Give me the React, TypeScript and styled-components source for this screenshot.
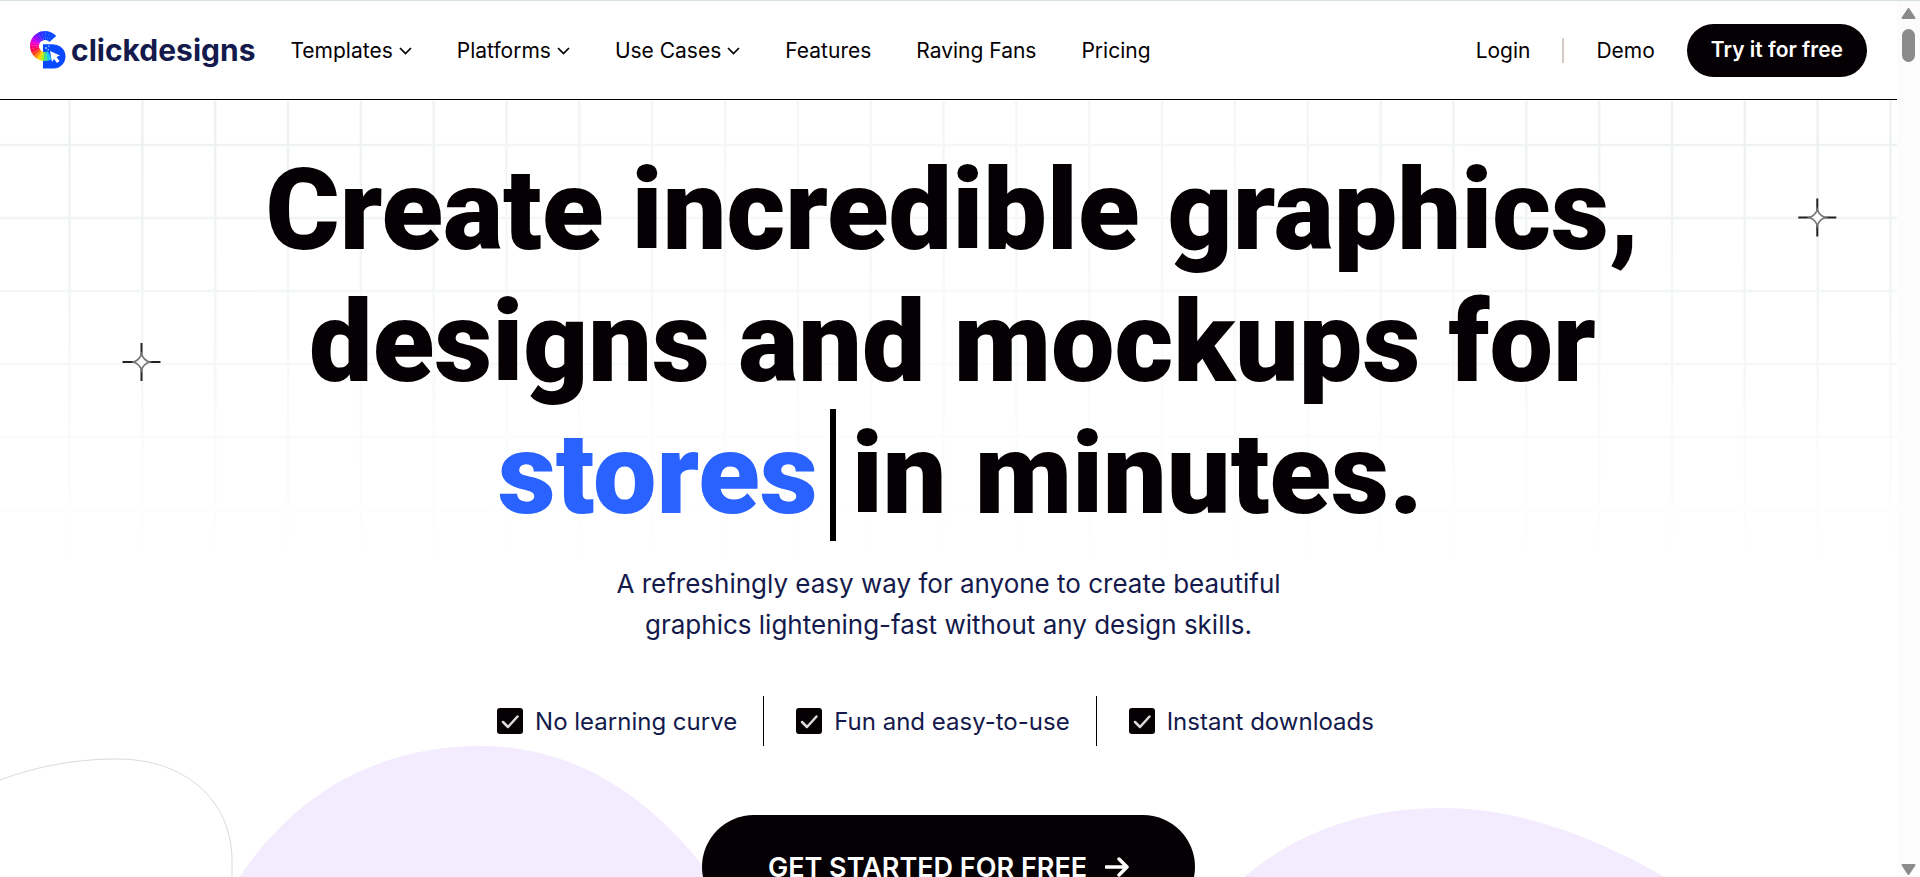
import React from "react";
import styled, { createGlobalStyle } from "styled-components";

const ink = "#050003";
const navy = "#141a4b";

const GlobalStyle = createGlobalStyle`
  *, *::before, *::after { box-sizing: border-box; }
  body { margin: 0; background: #fff; font-family: Inter, "Liberation Sans", sans-serif; color: ${ink}; }
  h1, p, ul { margin: 0; padding: 0; }
  ul { list-style: none; }
  a { color: inherit; text-decoration: none; }
  button { font: inherit; border: 0; cursor: pointer; }
`;

const Frame = styled.div`
  display: grid;
  grid-template-columns: 1fr 23px;
  height: 100vh;
  overflow: hidden;
  border-top: 1px solid #d6e2dd;
`;

const Page = styled.div`
  position: relative;
  min-width: 0;
  overflow: hidden;
`;

const Scrollbar = styled.div`
  display: flex;
  flex-direction: column;
  align-items: center;
  padding: 7px 0 2px;
  background: #fcfcfc;
`;

const Thumb = styled.div`
  width: 13px;
  height: 33px;
  margin: 10px 0 auto;
  border-radius: 7px;
  background: #8b8b8b;
`;

const Backdrop = styled.svg`
  position: absolute;
  inset: 0;
  width: 100%;
  height: 100%;
`;

const Header = styled.header`
  position: relative;
  display: flex;
  align-items: center;
  height: 99px;
  padding: 0 30px;
  background: #fff;
  border-bottom: 1px solid #000;
`;

const Brand = styled.a`
  display: flex;
  align-items: center;
  gap: 5px;
  color: ${navy};
  font-size: 30px;
  line-height: 36px;
  font-weight: 700;
`;

const NavList = styled.ul`
  display: flex;
  gap: 45px;
  margin-left: 35px;
  padding-top: 2px;
  font-size: 21px;
  line-height: 28px;
  white-space: nowrap;
`;

const NavLink = styled.a`
  display: flex;
  align-items: center;
  gap: 6px;
`;

const Account = styled.div`
  display: flex;
  align-items: center;
  gap: 32px;
  margin-left: auto;
  font-size: 21px;
  line-height: 28px;
`;

const AccountLink = styled.a`
  padding-top: 2px;
`;

const Rule = styled.span`
  width: 2px;
  height: 25px;
  background: #d5cbc6;
`;

const Pill = styled.button<{ $large?: boolean }>`
  display: flex;
  align-items: center;
  justify-content: center;
  gap: 18px;
  height: ${(p) => (p.$large ? 104 : 53)}px;
  padding: 0 ${(p) => (p.$large ? 66 : 24)}px;
  border-radius: 52px;
  background: ${ink};
  color: #fff;
  font-size: ${(p) => (p.$large ? 27 : 21)}px;
  font-weight: 600;
  white-space: nowrap;
`;

const Hero = styled.main`
  position: relative;
  display: flex;
  flex-direction: column;
  align-items: center;
  padding-top: 45px;
`;

const Title = styled.h1`
  padding-left: 8px;
  font-family: Roboto, sans-serif;
  font-size: 113px;
  line-height: 132px;
  font-weight: 900;
  text-align: center;
`;

const TypedLine = styled.span`
  display: flex;
  justify-content: center;
  padding-left: 16px;
`;

const Typed = styled.span`
  margin-right: 16px;
  padding-right: 12px;
  border-right: 6px solid #000;
  color: #2962ff;
`;

const Lead = styled.p`
  margin-top: 22px;
  color: ${navy};
  font-size: 26px;
  line-height: 41px;
  text-align: center;
`;

const Perks = styled.ul`
  display: flex;
  margin: 51px 0 69px;
`;

const Perk = styled.li`
  display: flex;
  align-items: center;
  gap: 12px;
  height: 50px;
  padding: 0 26px 0 32px;
  color: ${navy};
  font-size: 24px;
  &:first-child { padding-left: 0; }
  & + & { border-left: 1px solid #000; }
`;

const Chevron = () => (
  <svg width="13" height="8" viewBox="0 0 13 8" fill="none" aria-hidden="true">
    <path d="M1 1l5.500 5.500L12 1" stroke="#000" strokeWidth="1.700" />
  </svg>
);

const Tick = () => (
  <svg width="26" height="26" viewBox="0 0 26 26" fill="none" aria-hidden="true">
    <rect width="26" height="26" rx="3" fill="#050003" />
    <path d="M6 14l5 5L20.500 8.500" stroke="#dcdcdc" strokeWidth="2.500" strokeLinecap="round" strokeLinejoin="round" />
  </svg>
);

const Arrow = () => (
  <svg width="24" height="20" viewBox="0 0 24 20" fill="none" aria-hidden="true">
    <path d="M1 10h21M14 2l8 8-8 8" stroke="#fff" strokeWidth="3.500" strokeLinecap="round" strokeLinejoin="round" />
  </svg>
);

const Triangle = ({ down }: { down?: boolean }) => (
  <svg width="15" height="11" viewBox="0 0 15 11" aria-hidden="true">
    <path
      d={down ? "M1.500 1h12L7.500 10z" : "M1.500 10h12L7.500 1z"}
      fill="#8b8b8b"
      stroke="#8b8b8b"
      strokeWidth="2"
      strokeLinejoin="round"
    />
  </svg>
);

const arcColors = [
  "#0a47ff", "#0a47ff", "#0a45ff", "#1a3cff", "#3a2cff", "#6a18ff", "#9a08ff", "#c800f0",
  "#f000b8", "#ff0080", "#ff1048", "#ff4020", "#ff8a10", "#ffd000", "#a8f020", "#40e890", "#20c8ff",
];

const arcPoint = (degrees: number) => {
  const a = (degrees * Math.PI) / 180;
  return `${15 + 10.5 * Math.cos(a)} ${15 - 10.5 * Math.sin(a)}`;
};

const LogoMark = () => (
  <svg width="36" height="38" viewBox="0 0 36 38" fill="none" aria-hidden="true">
    <path d="M13 13.500h10.500a12 12 0 0 1 0 24H13z" fill="#0848ff" />
    {arcColors.map((color, i) => {
      const from = 42 + i * 15;
      return (
        <path key={from} d={`M${arcPoint(from)}A10.500 10.500 0 0 0 ${arcPoint(from + 16)}`} stroke={color} strokeWidth="9" />
      );
    })}
    <path d="M13 13.500h10v6H13z" fill="#0848ff" />
    <path d="M15 16h2v2h-2zM18 14.500h1.500V16H18zM17.500 18H19v1.500h-1.500z" fill="#7fb0ff" />
    <path d="M20 20l10 4.500-3.500 1.500 3 4-2.500 2-3-4-2 3z" fill="#fff" />
  </svg>
);

const Sparkle = ({ x, y }: { x: number; y: number }) => (
  <g transform={`translate(${x} ${y})`} fill="#fff">
    <path d="M0-19V-7M0 7V19M-19 0H-7M7 0H19" stroke="#222" strokeWidth="2" />
    <path d="M0-8Q2-2 8 0Q2 2 0 8Q-2 2-8 0Q-2-2 0-8z" stroke="#777" strokeWidth="1.700" />
  </g>
);

const columns = Array.from({ length: 26 }, (_, i) => 69.5 + i * 72.84);
const rows = Array.from({ length: 6 }, (_, i) => 144 + i * 73);

const Scene = () => (
  <Backdrop viewBox="0 0 1897 876" preserveAspectRatio="xMidYMin slice" aria-hidden="true">
    <defs>
      <linearGradient id="down" x1="0" y1="0" x2="0" y2="1">
        <stop offset="0.1" stopColor="#fff" stopOpacity="0" />
        <stop offset="0.5" stopColor="#fff" stopOpacity="0.4" />
        <stop offset="1" stopColor="#fff" />
      </linearGradient>
      <linearGradient id="across">
        <stop offset="0.1" stopColor="#fff" stopOpacity="0" />
        <stop offset="0.35" stopColor="#fff" stopOpacity="0.4" />
        <stop offset="0.65" stopColor="#fff" stopOpacity="0.4" />
        <stop offset="0.9" stopColor="#fff" stopOpacity="0" />
      </linearGradient>
    </defs>
    <g stroke="#eef2f2" strokeWidth="2.500">
      {columns.map((x) => <line key={x} x1={x} x2={x} y1="98" y2="560" />)}
      {rows.map((y) => <line key={y} x1="0" x2="1897" y1={y} y2={y} />)}
    </g>
    <rect y="98" width="1897" height="470" fill="url(#down)" />
    <rect y="98" width="1897" height="470" fill="url(#across)" />
    <path d="M233 886C292 791 380 745 480 745C577 745 655 797 719 886z" fill="#f3ecfe" />
    <path d="M1235 884C1292 832 1362 807 1443 807C1520 807 1600 837 1678 884z" fill="#f3ecfe" />
    <path d="M0 779C40 764 80 758 117 758C185 758 232 799 232 860V876" fill="none" stroke="#dadada" />
    <Sparkle x={141.5} y={361} />
    <Sparkle x={1817.3} y={216.500} />
  </Backdrop>
);

const navItems = [
  { label: "Templates", menu: true },
  { label: "Platforms", menu: true },
  { label: "Use Cases", menu: true },
  { label: "Features" },
  { label: "Raving Fans" },
  { label: "Pricing" },
];

const perks = ["No learning curve", "Fun and easy-to-use", "Instant downloads"];

export default function App() {
  return (
    <>
      <GlobalStyle />
      <Frame>
        <Page>
          <Scene />
          <Header>
            <Brand href="#">
              <LogoMark />
              clickdesigns
            </Brand>
            <nav>
              <NavList>
                {navItems.map(({ label, menu }) => (
                  <li key={label}>
                    <NavLink href="#">
                      {label}
                      {menu && <Chevron />}
                    </NavLink>
                  </li>
                ))}
              </NavList>
            </nav>
            <Account>
              <AccountLink href="#">Login</AccountLink>
              <Rule />
              <AccountLink href="#">Demo</AccountLink>
              <Pill type="button">Try it for free</Pill>
            </Account>
          </Header>
          <Hero>
            <Title>
              Create incredible graphics,
              <br />
              designs and mockups for
              <TypedLine>
                <Typed>stores</Typed>in minutes.
              </TypedLine>
            </Title>
            <Lead>
              A refreshingly easy way for anyone to create beautiful
              <br />
              graphics lightening-fast without any design skills.
            </Lead>
            <Perks>
              {perks.map((perk) => (
                <Perk key={perk}>
                  <Tick />
                  {perk}
                </Perk>
              ))}
            </Perks>
            <Pill type="button" $large>
              GET STARTED FOR FREE
              <Arrow />
            </Pill>
          </Hero>
        </Page>
        <Scrollbar aria-hidden="true">
          <Triangle />
          <Thumb />
          <Triangle down />
        </Scrollbar>
      </Frame>
    </>
  );
}
